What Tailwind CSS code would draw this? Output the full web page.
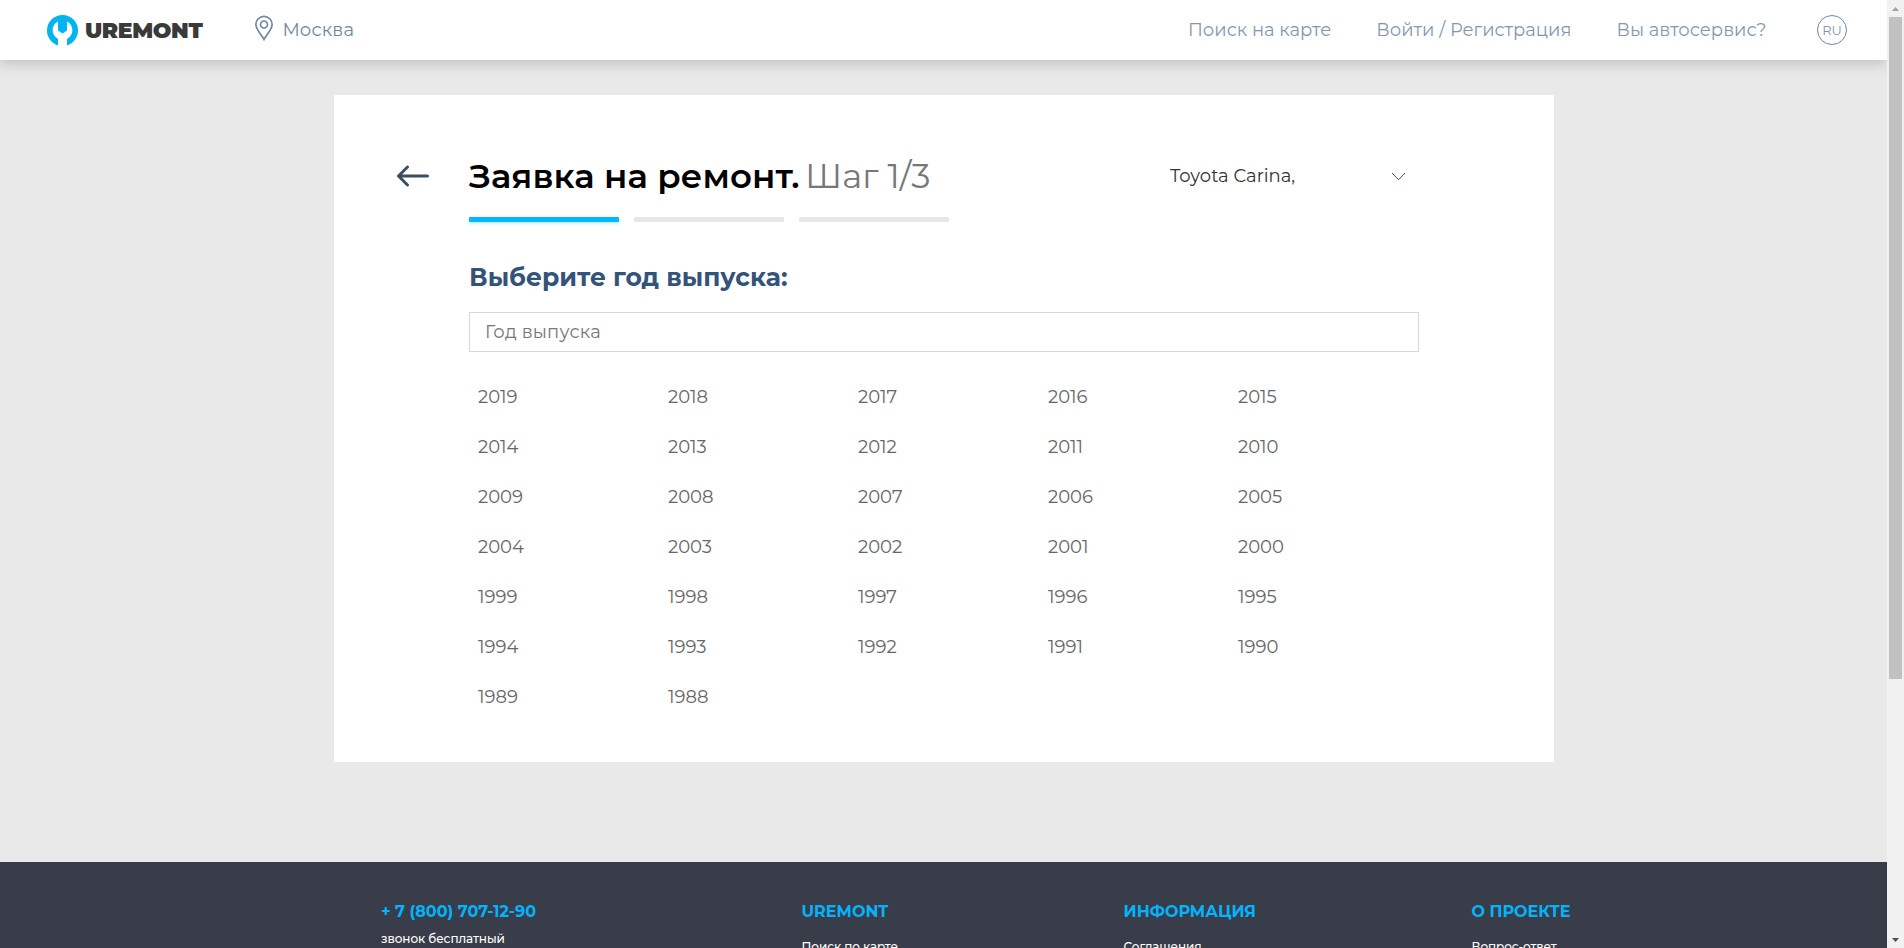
<!DOCTYPE html>
<html lang="ru">
<head>
<meta charset="utf-8">
<title>Uremont</title>
<script src="https://cdn.jsdelivr.net/npm/@tailwindcss/browser@4"></script>
</head>
<body class="flex h-screen overflow-hidden bg-[#e9e9e9] font-['Montserrat','Inter',sans-serif] text-lg text-black">
<div class="flex h-full w-[1887px] shrink-0 flex-col overflow-hidden">

  <header class="relative z-10 flex h-[60px] shrink-0 items-center bg-white pl-[47px] text-[#71869f] shadow-[0_4px_12px_rgba(0,0,0,0.17)]">
    <a class="flex items-center gap-[7px]">
      <svg class="h-[31px] w-[31px]" viewBox="0 0 31 31">
        <circle cx="15.5" cy="15.5" r="15.5" fill="#00b4f0"/>
        <path d="M11 6.500C7.600 8.200 5.600 11.500 5.600 15.300C5.600 19 7.700 22.200 11 24V31H20V24C23.300 22.200 25.400 19 25.400 15.300C25.400 11.500 23.400 8.200 20 6.500V15.500L15.500 18.500L11 15.500Z" fill="#fff"/>
      </svg>
      <span class="mt-0.5 text-[22px] leading-7 font-black tracking-[-0.4px] text-[#3a3a3a]">UREMONT</span>
    </a>
    <a class="ml-[52px] flex items-center gap-2">
      <svg class="-mt-1 h-[26px] w-5" viewBox="0 0 20 26" fill="none" stroke="currentColor" stroke-width="1.700">
        <path d="M10 24.300C8.500 21 1.900 14.700 1.900 9.500A8.100 8.100 0 0 1 18.100 9.500C18.100 14.700 11.500 21 10 24.300Z"/>
        <circle cx="10" cy="9.500" r="3.500"/>
      </svg>
      <span class="tracking-[0.15px]">Москва</span>
    </a>
    <nav class="ml-auto flex items-center pr-10">
      <a class="mr-[45px] opacity-85">Поиск на карте</a>
      <a class="mr-[45px] opacity-85">Войти / Регистрация</a>
      <a class="mr-[50.5px] opacity-85">Вы автосервис?</a>
      <span class="flex size-[30px] items-center justify-center rounded-full border border-[#71869f] text-[13px] text-[#71869f]/90">RU</span>
    </nav>
  </header>

  <main class="ml-[334px] mt-[35px] h-[667px] w-[1220px] shrink-0 bg-white pl-[63px] pr-[135px] pt-[61px]">
    <div class="flex h-10 items-center">
      <svg class="h-[22px] w-[32px]" viewBox="0 0 32 22" fill="none" stroke="#3c4f60" stroke-width="3" stroke-linecap="round" stroke-linejoin="round">
        <path d="M30.500 11H1.500M10.500 2L1.500 11L10.500 20"/>
      </svg>
      <h1 class="ml-10 flex text-[34px] leading-10 font-semibold tracking-[0.06px] whitespace-nowrap">Заявка на ремонт.<span class="ml-[5.5px] font-normal text-[#777]">Шаг 1/3</span></h1>
      <div class="ml-auto mr-[13px] flex w-[236px] items-center justify-between text-[#333]">
        <span>Toyota Carina,</span>
        <svg class="h-[9px] w-[15px]" viewBox="0 0 15 9" fill="none" stroke="#3a5478" stroke-width="1"><path d="M1 1L7.500 7.800L14 1"/></svg>
      </div>
    </div>
    <div class="ml-[72px]">
      <div class="mt-[21px] flex gap-[15px]">
        <div class="h-[5px] w-[150px] rounded-[1px] bg-[#00b8ff] shadow-[0_2px_3px_rgba(0,184,255,0.25)]"></div>
        <div class="h-[5px] w-[150px] rounded-[1px] bg-[#e7e7e7]"></div>
        <div class="h-[5px] w-[150px] rounded-[1px] bg-[#e7e7e7]"></div>
      </div>
      <h2 class="mt-[35px] text-[25px] leading-10 font-bold text-[#34537a]">Выберите год выпуска:</h2>
      <div class="mt-[15px] flex h-10 items-center border border-[#d6d6d6] pl-[15px] tracking-[0.18px] text-[#777]">Год выпуска</div>
      <div class="mt-5 grid grid-cols-5 text-[#666] leading-[50px] *:pl-[9px]">
        <a>2019</a><a>2018</a><a>2017</a><a>2016</a><a>2015</a>
        <a>2014</a><a>2013</a><a>2012</a><a>2011</a><a>2010</a>
        <a>2009</a><a>2008</a><a>2007</a><a>2006</a><a>2005</a>
        <a>2004</a><a>2003</a><a>2002</a><a>2001</a><a>2000</a>
        <a>1999</a><a>1998</a><a>1997</a><a>1996</a><a>1995</a>
        <a>1994</a><a>1993</a><a>1992</a><a>1991</a><a>1990</a>
        <a>1989</a><a>1988</a>
      </div>
    </div>
  </main>

  <footer class="mt-[100px] grid h-[200px] shrink-0 grid-cols-[420.5px_322px_348px_1fr] bg-[#393d49] pl-[381px] pt-[39px] text-xs font-medium text-white">
    <div>
      <h3 class="text-base leading-[22px] font-bold text-[#00b4ff]">+ 7 (800) 707-12-90</h3>
      <p class="mt-2 leading-4 tracking-[-0.08px]">звонок бесплатный</p>
    </div>
    <div>
      <h3 class="text-base leading-[22px] font-bold text-[#00b4ff]">UREMONT</h3>
      <p class="mt-4 leading-4 tracking-[-0.08px]">Поиск по карте</p>
    </div>
    <div>
      <h3 class="text-base leading-[22px] font-bold text-[#00b4ff]">ИНФОРМАЦИЯ</h3>
      <p class="mt-4 leading-4 tracking-[-0.08px]">Соглашения</p>
    </div>
    <div>
      <h3 class="text-base leading-[22px] font-bold text-[#00b4ff]">О ПРОЕКТЕ</h3>
      <p class="mt-4 leading-4 tracking-[-0.08px]">Вопрос-ответ</p>
    </div>
  </footer>
</div>

<!-- scrollbar -->
<div class="flex h-full w-[17px] shrink-0 flex-col items-center bg-[#f1f1f1]">
  <div class="flex h-[17px] shrink-0 items-center"><svg class="h-1 w-[7px]" viewBox="0 0 7 4"><path d="M0 4L3.500 0L7 4Z" fill="#a3a3a3"/></svg></div>
  <div class="h-[662px] w-[13px] bg-[#c1c1c1]"></div>
  <div class="mt-auto flex h-[17px] shrink-0 items-center"><svg class="h-1 w-[7px]" viewBox="0 0 7 4"><path d="M0 0L3.500 4L7 0Z" fill="#505050"/></svg></div>
</div>
</body>
</html>
